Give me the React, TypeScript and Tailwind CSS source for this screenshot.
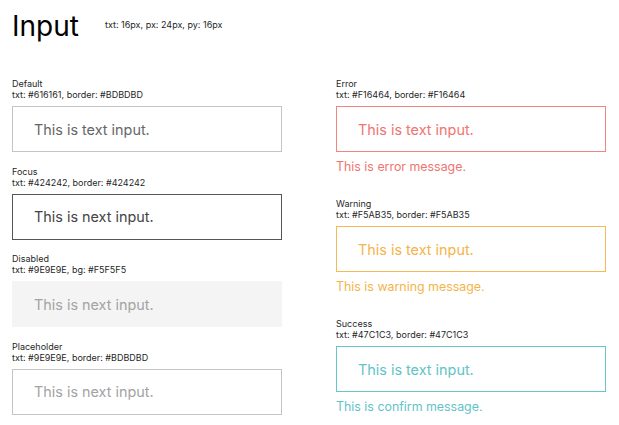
import React from 'react';

type Variant = {
  title: string;
  spec: string;
  value?: string;
  placeholder?: string;
  box: string;
  message?: string;
  msgColor?: string;
};

const leftCol: Variant[] = [
  {
    title: 'Default',
    spec: 'txt: #616161, border: #BDBDBD',
    value: 'This is text input.',
    box: 'border border-[#C4C4C4] text-[#666666] bg-white',
  },
  {
    title: 'Focus',
    spec: 'txt: #424242, border: #424242',
    value: 'This is next input.',
    box: 'border border-[#555555] text-[#444444] bg-white',
  },
  {
    title: 'Disabled',
    spec: 'txt: #9E9E9E, bg: #F5F5F5',
    value: 'This is next input.',
    box: 'border border-[#F4F4F4] text-[#A3A3A3] bg-[#F4F4F4]',
  },
  {
    title: 'Placeholder',
    spec: 'txt: #9E9E9E, border: #BDBDBD',
    placeholder: 'This is next input.',
    box: 'border border-[#C4C4C4] bg-white placeholder:text-[#A3A3A3]',
  },
];

const rightCol: Variant[] = [
  {
    title: 'Error',
    spec: 'txt: #F16464, border: #F16464',
    value: 'This is text input.',
    box: 'border border-[#F28580] text-[#F0746F] bg-white',
    message: 'This is error message.',
    msgColor: 'text-[#F0746F]',
  },
  {
    title: 'Warning',
    spec: 'txt: #F5AB35, border: #F5AB35',
    value: 'This is text input.',
    box: 'border border-[#F5BA55] text-[#F4B449] bg-white',
    message: 'This is warning message.',
    msgColor: 'text-[#F4B449]',
  },
  {
    title: 'Success',
    spec: 'txt: #47C1C3, border: #47C1C3',
    value: 'This is text input.',
    box: 'border border-[#66C6C8] text-[#5FC4C6] bg-white',
    message: 'This is confirm message.',
    msgColor: 'text-[#5FC4C6]',
  },
];

function Field({ v }: { v: Variant }) {
  return (
    <div>
      <div className="text-[9px] leading-[11px] text-[#1f1f1f]">
        <div>{v.title}</div>
        <div>{v.spec}</div>
      </div>
      <input
        readOnly
        disabled={v.title === 'Disabled'}
        value={v.value}
        placeholder={v.placeholder}
        className={`mt-[6px] block h-[46px] w-full pl-[21px] text-[14.4px] outline-none ${v.box}`}
      />
      {v.message && (
        <div className={`mt-[5px] text-[12.4px] leading-[20px] ${v.msgColor}`}>{v.message}</div>
      )}
    </div>
  );
}

export default function App() {
  return (
    <div className="min-h-[425px] bg-white px-3 pt-3" style={{ fontFamily: 'Inter, "Noto Sans", sans-serif' }}>
      <div className="flex items-start">
        <h1 className="text-[28px] leading-[28px] text-black">Input</h1>
        <span className="ml-[26px] mt-[7px] text-[9px] leading-[11px] text-[#1f1f1f]">
          txt: 16px, px: 24px, py: 16px
        </span>
      </div>

      <div className="mt-[38px] grid grid-cols-[270px_270px] gap-x-[54px]">
        <div className="flex flex-col gap-[13.5px]">
          {leftCol.map((v) => (
            <Field key={v.title} v={v} />
          ))}
        </div>
        <div className="flex flex-col gap-[21px]">
          {rightCol.map((v) => (
            <Field key={v.title} v={v} />
          ))}
        </div>
      </div>
    </div>
  );
}
